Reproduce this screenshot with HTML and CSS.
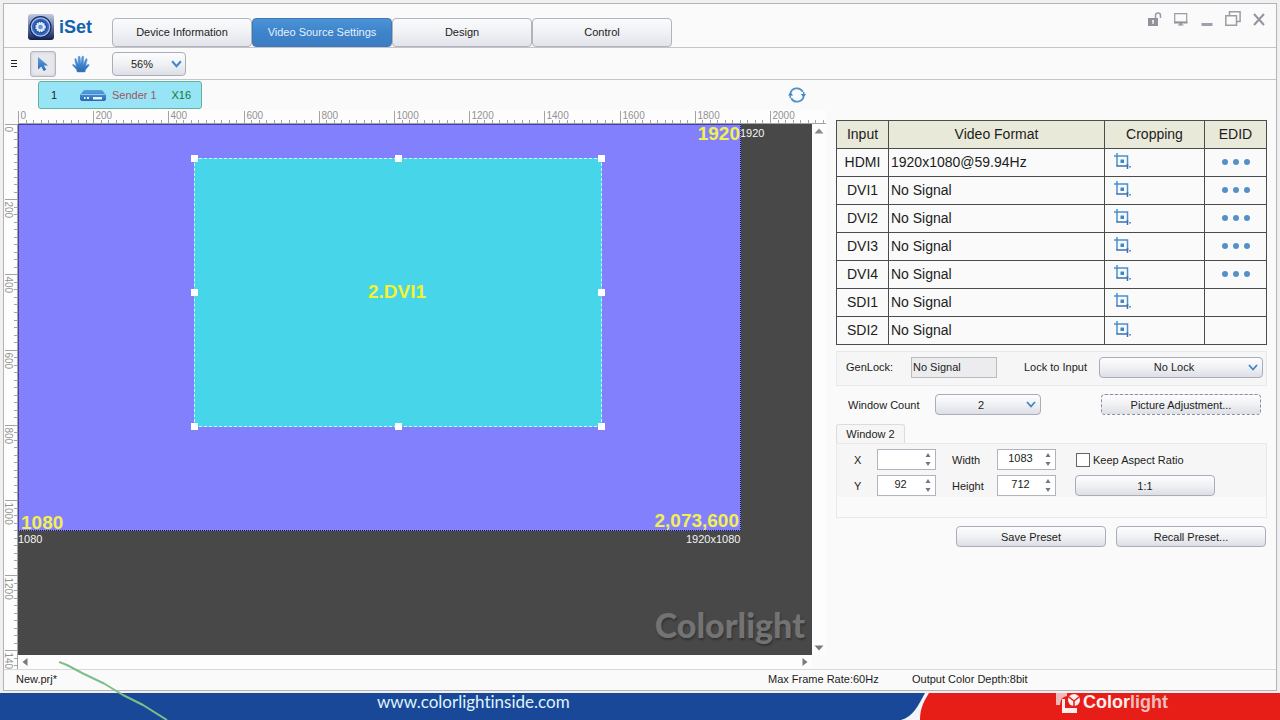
FILE: index.html
```html
<!DOCTYPE html>
<html lang="en">
<head>
<meta charset="utf-8">
<title>iSet - Video Source Settings</title>
<link rel="stylesheet" href="styles.css">
</head>
<body>
<svg class="defs" aria-hidden="true">
  <defs>
    <linearGradient id="blue" x1="0" y1="0" x2="0" y2="1"><stop offset="0" stop-color="#5aa0e0"/><stop offset="1" stop-color="#2b68b4"/></linearGradient>
    <linearGradient id="badge" x1="0" y1="0" x2="0" y2="1"><stop offset="0" stop-color="#c3cbe0"/><stop offset=".45" stop-color="#6d83b4"/><stop offset="1" stop-color="#0f1f4c"/></linearGradient>
    <symbol id="crop" viewBox="0 0 17 17">
      <path d="M3 0v13M0 3h13.500v10" fill="none" stroke="#4a90d2" stroke-width="1.500"/>
      <path d="M2.300 13h9.700M13.500 11v5M12 13h2" fill="none" stroke="#3971b4" stroke-width="1.500"/>
      <path d="M6.500 6.500h3.500v3.500h-3.500z" fill="#4384c8"/>
      <path d="M15.300 13h1.500v1.500h-1.500z" fill="#3971b4"/>
    </symbol>
    <symbol id="dots" viewBox="0 0 28 6"><g fill="#5590c8"><circle cx="3" cy="3" r="3"/><circle cx="14" cy="3" r="3"/><circle cx="25" cy="3" r="3"/></g></symbol>
    <symbol id="chevron" viewBox="0 0 10 7"><path d="M1 1l4 4.500L9 1" fill="none" stroke="#3f85ca" stroke-width="1.800"/></symbol>
    <symbol id="spin" viewBox="0 0 6 13"><path d="M3 0l2.500 4H.5zM3 13l2.500-4H.5z" fill="#72767f"/></symbol>
  </defs>
</svg>

<div class="window">
  <header class="header">
    <div class="brand">
      <svg width="26" height="26" viewBox="0 0 26 26" aria-hidden="true">
        <rect width="26" height="26" rx="3" fill="url(#badge)"/>
        <circle cx="12.500" cy="13" r="11" fill="#13285f"/>
        <circle cx="12.500" cy="13" r="9.200" fill="#3767bd" stroke="#a9c4ee" stroke-width="1.200"/>
        <circle cx="12.500" cy="13" r="6.500" fill="#1f4795"/>
        <circle cx="12.500" cy="13" r="4.300" fill="#dfeafa" stroke="#e4eefc" stroke-width="2" stroke-dasharray="1.500 .75"/>
        <circle cx="12.500" cy="13" r="2.300" fill="#5b97da"/>
      </svg>
      <span class="brand-name">iSet</span>
    </div>
    <nav class="tabs">
      <button class="tab">Device Information</button>
      <button class="tab active">Video Source Settings</button>
      <button class="tab">Design</button>
      <button class="tab">Control</button>
    </nav>
    <div class="win-icons">
      <button class="icon-btn" aria-label="Unlock"><svg width="16" height="16" viewBox="0 0 16 16"><path d="M8.500 7V4.500a2.500 2.500 0 0 1 5 0V7" fill="none" stroke="#9c9ca6" stroke-width="1.500"/><path d="M1 7h10v8H1z" fill="#92929c"/><path d="M6 9v4M5 10h2" stroke="#fafafa" stroke-width="1.200"/></svg></button>
      <button class="icon-btn" aria-label="Display"><svg width="16" height="16" viewBox="0 0 16 16"><path d="M1.700 2.700h12v8.600h-12z" fill="none" stroke="#9c9ca6" stroke-width="1.200"/><path d="M1 10.500h13.400v2H1zM6.500 12h2.500v2h-2.500zM5 13.500h5.500v1H5z" fill="#92929c"/></svg></button>
      <button class="icon-btn" aria-label="Minimize"><svg width="16" height="16" viewBox="0 0 16 16"><path d="M2.500 12h11v3h-11z" fill="#a0a0ac"/></svg></button>
      <button class="icon-btn" aria-label="Restore"><svg width="16" height="16" viewBox="0 0 16 16"><path d="M4.500 4.500V.8h10.600v9.700h-3.600M.8 4.800h10.700v9.500H.8z" fill="none" stroke="#9c9ca6" stroke-width="1.500"/></svg></button>
      <button class="icon-btn" aria-label="Close"><svg width="16" height="16" viewBox="0 0 16 16"><path d="M3 3l10 11M13 3L3 14" stroke="#9494a0" stroke-width="2"/></svg></button>
    </div>
  </header>

  <div class="toolbar">
    <button class="icon-btn menu" aria-label="Menu"><svg width="6" height="8" viewBox="0 0 6 8"><path d="M0 .5h6M0 3.500h6M0 6.500h6" stroke="#222" stroke-width="1"/></svg></button>
    <button class="tool selected" aria-label="Select"><svg width="12" height="16" viewBox="0 0 12 16"><path d="M1 1v12.500l3.300-3 2.400 4.500 2.500-1.200-2.400-4.300H11z" fill="url(#blue)"/></svg></button>
    <button class="tool" aria-label="Pan"><svg width="18" height="18" viewBox="0 0 18 18"><path d="M5.200 17L4.500 14.500 1 10.800Q0 9.500 1.300 9.300L4.300 11.500 2.700 4.500Q2.800 3 4 3.700L6.300 9.500 6.200 2Q7 .3 8 1.700L8.800 9 10 1.500Q11 .2 11.700 1.800L11.300 9.400 13.800 4Q15 3 15.200 4.500L13.700 10.800 16 9.500Q17.700 9.200 17 10.500L13.500 14.800 13 17z" fill="url(#blue)" stroke="#4a8ed2" stroke-width=".5"/></svg></button>
    <div class="select zoom">
      <select aria-label="Zoom"><option>56%</option></select>
      <svg class="chevron" width="11" height="8"><use href="#chevron"/></svg>
    </div>
  </div>

  <main class="main">
    <section class="workspace">
      <div class="senders">
        <button class="sender">
          <span class="num">1</span>
          <svg width="26" height="11" viewBox="0 0 26 11" aria-hidden="true"><path d="M4 0h18l4 5v4.500L24.500 11h-23L0 9.500V5z" fill="url(#blue)"/><path d="M1 4.500h24" stroke="#8fc7ee" stroke-width="1"/><path d="M13 7h9v2.500h-9zM4 7h1.500v2H4zM7 7h2v2H7z" fill="#e8f4fc"/></svg>
          <span class="name">Sender 1</span>
          <span class="ports">X16</span>
        </button>
        <button class="icon-btn" aria-label="Refresh"><svg width="18" height="16" viewBox="0 0 18 16"><path d="M2.300 6.500a6.800 6.800 0 0 1 12.500-1.700M15.700 9.500a6.800 6.800 0 0 1-12.500 1.700" fill="none" stroke="#4d92d2" stroke-width="1.800"/><path d="M15.700 5v3.500M2.300 11V7.500" stroke="#4d92d2" stroke-width="1.500"/><path d="M12.800 7h5.200l-2.300 3.500zM0 8.500h5.200L2.500 5.200z" fill="#3f85ca"/></svg></button>
      </div>
      <div class="board">
        <svg class="ruler ruler-x" data-axis="x" data-max="2000" role="presentation"></svg>
        <svg class="ruler ruler-y" data-axis="y" data-max="1400" role="presentation"></svg>
        <div class="stage">
          <div class="screen">
            <span class="mark top-right">1920</span>
            <span class="mark bottom-left">1080</span>
            <span class="mark bottom-right">2,073,600</span>
            <div class="layer">
              <span>2.DVI1</span>
              <i class="h nw"></i><i class="h n"></i><i class="h ne"></i>
              <i class="h w"></i><i class="h e"></i>
              <i class="h sw"></i><i class="h s"></i><i class="h se"></i>
            </div>
          </div>
          <span class="dim dim-x">1920</span>
          <span class="dim dim-y">1080</span>
          <span class="dim dim-total">1920x1080</span>
          <span class="watermark">Colorlight</span>
        </div>
        <div class="scroll-y">
          <svg width="14" height="14" viewBox="0 0 14 14"><path d="M7 4.500l4.500 5h-9z" fill="#8b8b8b"/></svg>
          <svg width="14" height="14" viewBox="0 0 14 14"><path d="M7 9.500l4.500-5h-9z" fill="#7a7a7a"/></svg>
        </div>
        <div class="scroll-x">
          <svg width="14" height="14" viewBox="0 0 14 14"><path d="M4.500 7l5-4v8z" fill="#7a7a7a"/></svg>
          <svg width="14" height="14" viewBox="0 0 14 14"><path d="M9.500 7l-5-4v8z" fill="#7a7a7a"/></svg>
        </div>
      </div>
    </section>

    <aside class="side">
      <table class="inputs">
        <colgroup><col class="c-input"><col><col class="c-crop"><col class="c-edid"></colgroup>
        <thead><tr><th>Input</th><th>Video Format</th><th>Cropping</th><th>EDID</th></tr></thead>
        <tbody>
          <tr><td>HDMI</td><td>1920x1080@59.94Hz</td><td><button class="icon-btn" aria-label="Crop HDMI"><svg width="17" height="17"><use href="#crop"/></svg></button></td><td><button class="icon-btn" aria-label="EDID HDMI"><svg width="28" height="6"><use href="#dots"/></svg></button></td></tr>
          <tr><td>DVI1</td><td>No Signal</td><td><button class="icon-btn" aria-label="Crop DVI1"><svg width="17" height="17"><use href="#crop"/></svg></button></td><td><button class="icon-btn" aria-label="EDID DVI1"><svg width="28" height="6"><use href="#dots"/></svg></button></td></tr>
          <tr><td>DVI2</td><td>No Signal</td><td><button class="icon-btn" aria-label="Crop DVI2"><svg width="17" height="17"><use href="#crop"/></svg></button></td><td><button class="icon-btn" aria-label="EDID DVI2"><svg width="28" height="6"><use href="#dots"/></svg></button></td></tr>
          <tr><td>DVI3</td><td>No Signal</td><td><button class="icon-btn" aria-label="Crop DVI3"><svg width="17" height="17"><use href="#crop"/></svg></button></td><td><button class="icon-btn" aria-label="EDID DVI3"><svg width="28" height="6"><use href="#dots"/></svg></button></td></tr>
          <tr><td>DVI4</td><td>No Signal</td><td><button class="icon-btn" aria-label="Crop DVI4"><svg width="17" height="17"><use href="#crop"/></svg></button></td><td><button class="icon-btn" aria-label="EDID DVI4"><svg width="28" height="6"><use href="#dots"/></svg></button></td></tr>
          <tr><td>SDI1</td><td>No Signal</td><td><button class="icon-btn" aria-label="Crop SDI1"><svg width="17" height="17"><use href="#crop"/></svg></button></td><td></td></tr>
          <tr><td>SDI2</td><td>No Signal</td><td><button class="icon-btn" aria-label="Crop SDI2"><svg width="17" height="17"><use href="#crop"/></svg></button></td><td></td></tr>
        </tbody>
      </table>

      <div class="lock-panel">
        <label for="genlock">GenLock:</label>
        <input id="genlock" class="readonly" value="No Signal" readonly>
        <label class="lock-label" for="lock">Lock to Input</label>
        <div class="select lock"><select id="lock"><option>No Lock</option></select><svg class="chevron" width="10" height="7"><use href="#chevron"/></svg></div>
      </div>

      <div class="count-row">
        <label for="count">Window Count</label>
        <div class="select count"><select id="count"><option>2</option></select><svg class="chevron" width="10" height="7"><use href="#chevron"/></svg></div>
        <button class="btn focused">Picture Adjustment...</button>
      </div>

      <button class="win-tab">Window 2</button>
      <div class="win-panel">
        <label for="x">X</label>
        <div class="spin"><input id="x" value=""><svg width="6" height="13"><use href="#spin"/></svg></div>
        <label for="w">Width</label>
        <div class="spin"><input id="w" value="1083"><svg width="6" height="13"><use href="#spin"/></svg></div>
        <label class="check"><input type="checkbox">Keep Aspect Ratio</label>
        <label for="y">Y</label>
        <div class="spin"><input id="y" value="92"><svg width="6" height="13"><use href="#spin"/></svg></div>
        <label for="h">Height</label>
        <div class="spin"><input id="h" value="712"><svg width="6" height="13"><use href="#spin"/></svg></div>
        <button class="btn">1:1</button>
      </div>

      <div class="presets">
        <button class="btn">Save Preset</button>
        <button class="btn">Recall Preset...</button>
      </div>
    </aside>
  </main>

  <div class="status">
    <span class="file">New.prj*</span>
    <span class="rate">Max Frame Rate:60Hz</span>
    <span class="depth">Output Color Depth:8bit</span>
  </div>
</div>

<footer class="footer">
  <a class="site" href="#">www.colorlightinside.com</a>
  <svg class="swoosh" width="40" height="27" viewBox="0 0 40 27" aria-hidden="true"><path d="M0 0h40v27H0z" fill="#f4f4f8"/><path d="M0 0h25C18 13 13 24 1 27H0z" fill="#1a4899"/><path d="M40 0H29C22 11 20 18 20 27h20z" fill="#e61e17"/></svg>
  <div class="company">
    <svg width="26" height="21" viewBox="0 0 26 21" aria-hidden="true"><path d="M0 0h11v3Q4 4 4 12H0z" fill="#eeb9b8"/><path d="M6 6h3v9h12v5H6z" fill="#fbeeee"/><circle cx="18" cy="7" r="6" fill="#fbeeee"/><path d="M18 8v6M18 8l-5-4M18 8l5-4" stroke="#e61e17" stroke-width="1.500"/></svg>
    <span>Color<span class="fade">light</span></span>
  </div>
</footer>

<svg class="pen" width="110" height="60" viewBox="0 0 110 60" aria-hidden="true"><path d="M0 2L8 5 24 13.500 45 23.500 64 35 84 45 108 60" fill="none" stroke="#7cc088" stroke-width="2" stroke-linejoin="round"/></svg>
<script src="ruler.js"></script>
</body>
</html>
```
FILE: styles.css
```css
* { box-sizing: border-box; }
body {
  margin: 0;
  min-height: 100vh;
  display: flex;
  flex-direction: column;
  position: relative;
  overflow: hidden;
  background: #f0f0f2;
  color: #1c1c20;
  font: 11px/14px "Liberation Sans", Arial, sans-serif;
}
button, input, select { font: inherit; color: inherit; margin: 0; padding: 0; }
svg { display: block; flex: none; }
.defs { position: absolute; width: 0; height: 0; }
.icon-btn { border: 0; background: none; display: grid; place-items: center; }

.window {
  flex: 1;
  display: flex;
  flex-direction: column;
  margin: 3px 3px 2px;
  border: 1px solid #b4b4b6;
  background: #fafafa;
}
.header {
  display: flex;
  align-items: flex-start;
  height: 44px;
  border-bottom: 1px solid #c4c4ca;
}
.brand {
  display: flex;
  align-items: center;
  gap: 5px;
  width: 108px;
  padding: 10px 0 0 24px;
}
.brand-name {
  font: bold 18px/26px "Liberation Sans", Arial, sans-serif;
  color: #1263ae;
}
.tabs { display: flex; padding-top: 14px; }
.tab {
  width: 140px;
  height: 29px;
  padding-bottom: 2px;
  border: 1px solid #b0b2bc;
  border-radius: 4px;
  background: linear-gradient(#fafbfc, #f0f1f5 50%, #e2e4ea);
}
.tab.active {
  color: #e4f1fc;
  border-color: #3f78b8;
  background: linear-gradient(#4c92d6, #3d84cb 50%, #3d7cc2);
}
.win-icons { display: flex; gap: 10px; margin-left: auto; padding: 7px 9px 0 0; }

.toolbar {
  display: flex;
  align-items: center;
  height: 32px;
  border-bottom: 1px solid #c4c4ca;
}
.menu { width: 20px; margin-right: 6px; }
.tool {
  display: grid;
  place-items: center;
  width: 26px;
  height: 26px;
  margin-right: 12px;
  border: 1px solid transparent;
  border-radius: 3px;
  background: none;
}
.tool.selected { border-color: #b4b6be; background: #e6e8ed; box-shadow: inset 0 0 3px #c0c2c8; }

.select { position: relative; }
.select select {
  appearance: none;
  display: block;
  width: 100%;
  height: 21px;
  padding-right: 14px;
  border: 1px solid #a9adb9;
  border-radius: 4px;
  background: linear-gradient(#fdfdfe, #f0f1f4 50%, #dddfe6);
  text-align: center;
  text-align-last: center;
}
.chevron { position: absolute; right: 5px; top: 7px; pointer-events: none; }
.zoom { width: 74px; margin-left: 6px; }
.zoom select { height: 24px; }
.zoom .chevron { top: 8px; right: 4px; }

.main { flex: 1; display: flex; gap: 10px; padding-right: 9px; }
.workspace { flex: 1; min-width: 0; display: flex; flex-direction: column; }
.senders {
  display: flex;
  align-items: center;
  justify-content: space-between;
  height: 30px;
  padding: 0 20px 0 34px;
}
.sender {
  display: flex;
  align-items: center;
  width: 164px;
  height: 28px;
  padding: 0 10px 0 12px;
  border: 1px solid #62b59a;
  border-radius: 3px;
  background: #97e4f7;
}
.num { width: 29px; text-align: left; }
.name { margin-left: 6px; color: #a05560; }
.ports { margin-left: auto; color: #127a35; }

.board {
  flex: 1;
  display: grid;
  grid-template-columns: 14px 1fr 14px;
  grid-template-rows: 14px 1fr 14px;
}
.ruler { overflow: hidden; background: #fdfdfd; width: 100%; height: 100%; }
.ruler path { fill: none; stroke: #a3a3a3; }
.ruler text { font-size: 10px; fill: #929292; }
.ruler-x { grid-area: 1 / 2 / 2 / 4; }
.ruler-y { grid-area: 2 / 1 / 4 / 2; }
.stage {
  grid-area: 2 / 2;
  position: relative;
  overflow: hidden;
  background: #484848;
}
.screen {
  position: relative;
  width: 723px;
  height: 407px;
  background: #8280fd;
  border: 1px solid #4340a0;
  border-right: 1px dotted #151540;
  border-bottom: 1px dotted #151540;
}
.mark, .layer { color: #f2f232; font-size: 19px; line-height: 20px; font-weight: bold; }
.mark { position: absolute; color: #f2f050; }
.top-right { right: 0; top: -1px; }
.bottom-left { left: 2px; bottom: -3px; }
.bottom-right { right: 1px; bottom: -1px; }
.layer {
  position: absolute;
  left: 175px;
  top: 33px;
  width: 408px;
  height: 269px;
  display: grid;
  place-items: center;
  padding: 0 2px 2px 0;
  border: 1px dashed #d4f4fa;
  background: #46d5e9;
}
.h { position: absolute; width: 7px; height: 7px; background: #fff; }
.nw, .n, .ne { top: -4px; }
.sw, .s, .se { bottom: -4px; }
.w, .e { top: 130px; }
.nw, .w, .sw { left: -4px; }
.ne, .e, .se { right: -4px; }
.n, .s { left: 200px; }
.dim { position: absolute; color: #f4f4f4; }
.dim-x { left: 722px; top: 2px; }
.dim-y { left: 0; top: 408px; }
.dim-total { left: 668px; top: 408px; }
.watermark {
  position: absolute;
  right: 7px;
  bottom: 8px;
  font: 900 34px/44px Lato, sans-serif;
  color: #737373;
  text-shadow: 1px 2px 2px #343434;
}
.scroll-y { grid-area: 2 / 3; display: flex; flex-direction: column; justify-content: space-between; background: #fdfdfd; }
.scroll-x { grid-area: 3 / 2; display: flex; justify-content: space-between; background: #fdfdfd; }

.side { width: 431px; padding-top: 40px; }
.inputs {
  width: 100%;
  border-collapse: collapse;
  table-layout: fixed;
  font-size: 14px;
  line-height: 16px;
}
.inputs th, .inputs td { height: 28px; padding: 0 2px 2px; border: 1px solid #4c4c4c; }
.inputs th { font-weight: normal; background: #e9e9da; }
.inputs td { text-align: left; }
.inputs td:first-child { text-align: center; }
.inputs td:nth-child(3) .icon-btn { margin-left: 7px; }
.inputs td:nth-child(4) .icon-btn { margin: 0 auto; }
.c-input { width: 52px; }
.c-crop { width: 100px; }
.c-edid { width: 62px; }

.lock-panel {
  display: flex;
  align-items: center;
  height: 35px;
  margin-top: 6px;
  padding: 0 3px 3px 9px;
  border: 1px solid #e9e9ec;
  background: #f6f6f7;
}
.lock-panel label:first-child { width: 65px; }
.readonly { width: 86px; height: 21px; padding-left: 1px; border: 1px solid #b9bbc2; background: #ececef; }
.lock-label { margin-left: 27px; }
.lock { width: 164px; margin-left: auto; }

.count-row { display: flex; align-items: center; padding: 8px 6px 9px 12px; }
.count-row label { width: 87px; }
.count { width: 106px; }
.btn {
  height: 21px;
  border: 1px solid #a9adb9;
  border-radius: 4px;
  background: linear-gradient(#fdfdfe, #f0f1f4 50%, #dddfe6);
}
.count-row .btn { width: 160px; margin-left: auto; }
.btn.focused { border: 1px dashed #8a8e9a; }

.win-tab {
  display: block;
  width: 69px;
  height: 19px;
  border: 1px solid #dcdce0;
  border-bottom: 0;
  border-radius: 3px 3px 0 0;
  background: #f6f6f7;
}
.win-panel {
  display: grid;
  grid-template-columns: 23px 75px 45px 78px 140px;
  grid-template-rows: 21px 21px;
  align-items: center;
  align-content: start;
  row-gap: 5px;
  height: 75px;
  padding: 5px 0 0 17px;
  border: 1px solid #e9e9ec;
  background: linear-gradient(#f6f6f7 53px, #fafafa 53px);
}
.spin {
  display: flex;
  align-items: center;
  width: 59px;
  height: 21px;
  padding-right: 4px;
  border: 1px solid #b0b4be;
  background: #fff;
}
.spin input {
  flex: 1;
  min-width: 0;
  height: 19px;
  padding: 0 2px 4px 0;
  border: 0;
  background: none;
  text-align: center;
}
.check { display: flex; align-items: center; gap: 3px; margin-left: 1px; }
.check input { appearance: none; width: 14px; height: 14px; border: 1px solid #666; background: #fff; }

.presets { display: flex; justify-content: flex-end; gap: 10px; padding: 8px 1px 0 0; }
.presets .btn { width: 150px; }

.status {
  display: grid;
  grid-template-columns: 1fr 144px 364px;
  align-items: center;
  height: 21px;
  padding: 0 0 2px 12px;
  border-top: 1px solid #d6dad8;
}

.footer { display: flex; height: 27px; background: #1a4899; overflow: hidden; }
.site {
  flex: 1;
  padding-left: 377px;
  color: #dff2fb;
  font: 17px/18px Lato, sans-serif;
  font-variant-ligatures: none;
  text-decoration: none;
}
.company {
  display: flex;
  gap: 1px;
  width: 340px;
  padding-left: 116px;
  background: #e61e17;
  color: #fdeeee;
  font-size: 18px;
  line-height: 19px;
  font-weight: bold;
}
.fade { color: #eebcbc; }
.pen { position: absolute; left: 59px; bottom: 0; pointer-events: none; }
```
FILE: ruler.js
```js
const NS = "http://www.w3.org/2000/svg";
const STEP = 752 / 100;

document.querySelectorAll(".ruler").forEach((svg) => {
  const horizontal = svg.dataset.axis === "x";
  const max = Number(svg.dataset.max);
  const size = 14;
  let d = horizontal ? "M0 13.5H2000" : "M13.5 0V2000";
  for (let i = 0; i < 110; i++) {
    const p = Math.round(i * STEP) + 0.5;
    const start = i % 10 === 0 ? 1 : size - 4;
    d += horizontal ? `M${p} ${start}V${size}` : `M${start} ${p}H${size}`;
    if (i % 10 === 0 && i * 20 <= max) {
      const t = document.createElementNS(NS, "text");
      t.textContent = i * 20;
      if (horizontal) {
        t.setAttribute("x", p + 2);
        t.setAttribute("y", 9);
      } else {
        t.setAttribute("transform", `translate(1 ${p + 2}) rotate(90)`);
      }
      svg.appendChild(t);
    }
  }
  const path = document.createElementNS(NS, "path");
  path.setAttribute("d", d);
  svg.prepend(path);
});
```
